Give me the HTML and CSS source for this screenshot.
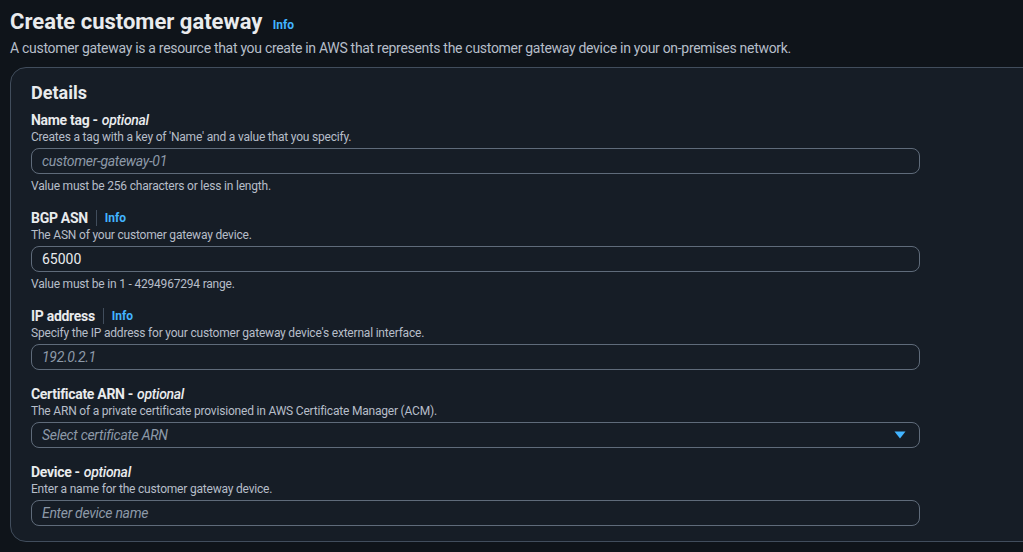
FILE: index.html
```html
<!DOCTYPE html>
<html lang="en">
<head>
    <meta charset="UTF-8">
    <meta name="viewport" content="width=device-width, initial-scale=1.0">
    <title>Create customer gateway</title>
<link rel="stylesheet" href="styles.css">
</head>
<body>
    <div class="page">
        <div class="page-header">
            <h1 class="page-title">Create customer gateway <a class="info-link" href="#">Info</a></h1>
            <p class="page-desc">A customer gateway is a resource that you create in AWS that represents the customer gateway device in your on-premises network.</p>
        </div>
        <div class="container">
            <h2 class="container-title">Details</h2>
            <div class="field">
                <div class="field-label">Name tag - <i>optional</i></div>
                <div class="field-desc">Creates a tag with a key of 'Name' and a value that you specify.</div>
                <div class="input placeholder">customer-gateway-01</div>
                <div class="field-hint">Value must be 256 characters or less in length.</div>
            </div>
            <div class="field">
                <div class="field-label">BGP ASN <span class="sep"></span><a class="info-link" href="#">Info</a></div>
                <div class="field-desc">The ASN of your customer gateway device.</div>
                <div class="input">65000</div>
                <div class="field-hint">Value must be in 1 - 4294967294 range.</div>
            </div>
            <div class="field">
                <div class="field-label">IP address <span class="sep"></span><a class="info-link" href="#">Info</a></div>
                <div class="field-desc">Specify the IP address for your customer gateway device's external interface.</div>
                <div class="input placeholder">192.0.2.1</div>
            </div>
            <div class="field">
                <div class="field-label">Certificate ARN - <i>optional</i></div>
                <div class="field-desc">The ARN of a private certificate provisioned in AWS Certificate Manager (ACM).</div>
                <div class="input select placeholder">
                    <span>Select certificate ARN</span>
                    <svg class="caret" width="12" height="8" viewBox="0 0 12 8"><path d="M0.5 0.5h11L6 7.5z" fill="#42b4ff"/></svg>
                </div>
            </div>
            <div class="field">
                <div class="field-label">Device - <i>optional</i></div>
                <div class="field-desc">Enter a name for the customer gateway device.</div>
                <div class="input placeholder">Enter device name</div>
            </div>
        </div>
    </div>
</body>
</html>
```

FILE: styles.css
```css
* {
    margin: 0;
    padding: 0;
    box-sizing: border-box;
}
body {
    background-color: #0f141a;
    color: #d1d5db;
    font-family: Roboto, "Noto Sans", Arial, sans-serif;
    overflow: hidden;
}
.page {
    padding: 8px 0 0 10px;
}
.page-title {
    font-size: 22px;
    line-height: 28px;
    font-weight: 700;
    color: #e9ebed;
}
.info-link {
    font-size: 12px;
    font-weight: 700;
    color: #42b4ff;
    text-decoration: none;
    letter-spacing: 0;
}
.page-title .info-link {
    margin-left: 5px;
}
.page-desc {
    font-size: 14px;
    line-height: 18px;
    color: #b6bec9;
    letter-spacing: -0.3px;
}
.container {
    margin-top: 10px;
    width: 1040px;
    background-color: #161d26;
    border: 1px solid #414d5c;
    border-radius: 16px;
    padding: 14px 20px 15px 20px;
}
.container-title {
    font-size: 18px;
    line-height: 22px;
    font-weight: 700;
    color: #e9ebed;
    margin-bottom: 7px;
}
.field {
    width: 889px;
    margin-bottom: 15px;
}
.field:last-child {
    margin-bottom: 0;
}
.field-label {
    font-size: 14px;
    line-height: 18px;
    font-weight: 700;
    color: #e9ebed;
    display: flex;
    align-items: center;
    letter-spacing: -0.3px;
}
.field-label i {
    font-weight: 500;
    margin-left: 4px;
}
.sep {
    width: 1px;
    height: 16px;
    background-color: #414d5c;
    margin: 0 8px;
}
.field-desc, .field-hint {
    font-size: 12px;
    line-height: 16px;
    color: #b6bec9;
    letter-spacing: -0.2px;
}
.field-hint {
    margin-top: 4px;
}
.input {
    margin-top: 3px;
    height: 26px;
    border: 1px solid #5f6b7a;
    border-radius: 8px;
    padding: 0 10px;
    font-size: 14px;
    line-height: 24px;
    color: #e9ebed;
}
.placeholder {
    font-style: italic;
    color: #8d99a8;
    letter-spacing: -0.3px;
}
.select {
    display: flex;
    align-items: center;
    justify-content: space-between;
    padding-right: 13px;
}
```
